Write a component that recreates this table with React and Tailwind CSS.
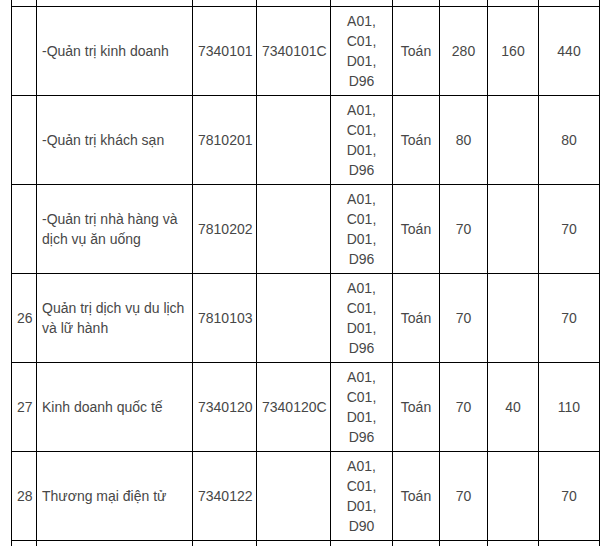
import React from "react";

const rows = [
  { stt: "", name: "-Quản trị kinh doanh", code: "7340101", code2: "7340101C", combo: ["A01,", "C01,", "D01,", "D96"], subj: "Toán", a: "280", b: "160", total: "440" },
  { stt: "", name: "-Quản trị khách sạn", code: "7810201", code2: "", combo: ["A01,", "C01,", "D01,", "D96"], subj: "Toán", a: "80", b: "", total: "80" },
  { stt: "", name: "-Quản trị nhà hàng và dịch vụ ăn uống", code: "7810202", code2: "", combo: ["A01,", "C01,", "D01,", "D96"], subj: "Toán", a: "70", b: "", total: "70" },
  { stt: "26", name: "Quản trị dịch vụ du lịch và lữ hành", code: "7810103", code2: "", combo: ["A01,", "C01,", "D01,", "D96"], subj: "Toán", a: "70", b: "", total: "70" },
  { stt: "27", name: "Kinh doanh quốc tế", code: "7340120", code2: "7340120C", combo: ["A01,", "C01,", "D01,", "D96"], subj: "Toán", a: "70", b: "40", total: "110" },
  { stt: "28", name: "Thương mại điện tử", code: "7340122", code2: "", combo: ["A01,", "C01,", "D01,", "D90"], subj: "Toán", a: "70", b: "", total: "70" },
];

const td = "border border-black px-[5px] py-0 align-middle";

function EmptyRow() {
  return (
    <tr className="h-[89px]">
      {Array.from({ length: 9 }).map((_, i) => (
        <td key={i} className={td}></td>
      ))}
    </tr>
  );
}

export default function App() {
  return (
    <div className="w-[613px] h-[546px] overflow-hidden bg-white">
      <table
        className="table-fixed border-collapse ml-[11px] mt-[-83px] w-[588px] text-[14px] leading-[20px] text-[#474747]"
        style={{ fontFamily: '"Liberation Sans", Arial, sans-serif' }}
      >
        <colgroup>
          <col className="w-[25px]" />
          <col className="w-[156px]" />
          <col className="w-[64px]" />
          <col className="w-[74px]" />
          <col className="w-[62px]" />
          <col className="w-[47px]" />
          <col className="w-[48px]" />
          <col className="w-[51px]" />
          <col className="w-[61px]" />
        </colgroup>
        <tbody>
          <EmptyRow />
          {rows.map((r, i) => (
            <tr key={i} className="h-[89px]">
              <td className={`${td} text-center px-0`}>{r.stt}</td>
              <td className={td}>{r.name}</td>
              <td className={`${td} text-center px-[2px]`}>{r.code}</td>
              <td className={`${td} text-center px-[2px]`}>{r.code2}</td>
              <td className={`${td} text-center`}>
                {r.combo.map((c) => (
                  <div key={c}>{c}</div>
                ))}
              </td>
              <td className={`${td} text-center px-0`}>{r.subj}</td>
              <td className={`${td} text-center`}>{r.a}</td>
              <td className={`${td} text-center`}>{r.b}</td>
              <td className={`${td} text-center`}>{r.total}</td>
            </tr>
          ))}
          <EmptyRow />
        </tbody>
      </table>
    </div>
  );
}
